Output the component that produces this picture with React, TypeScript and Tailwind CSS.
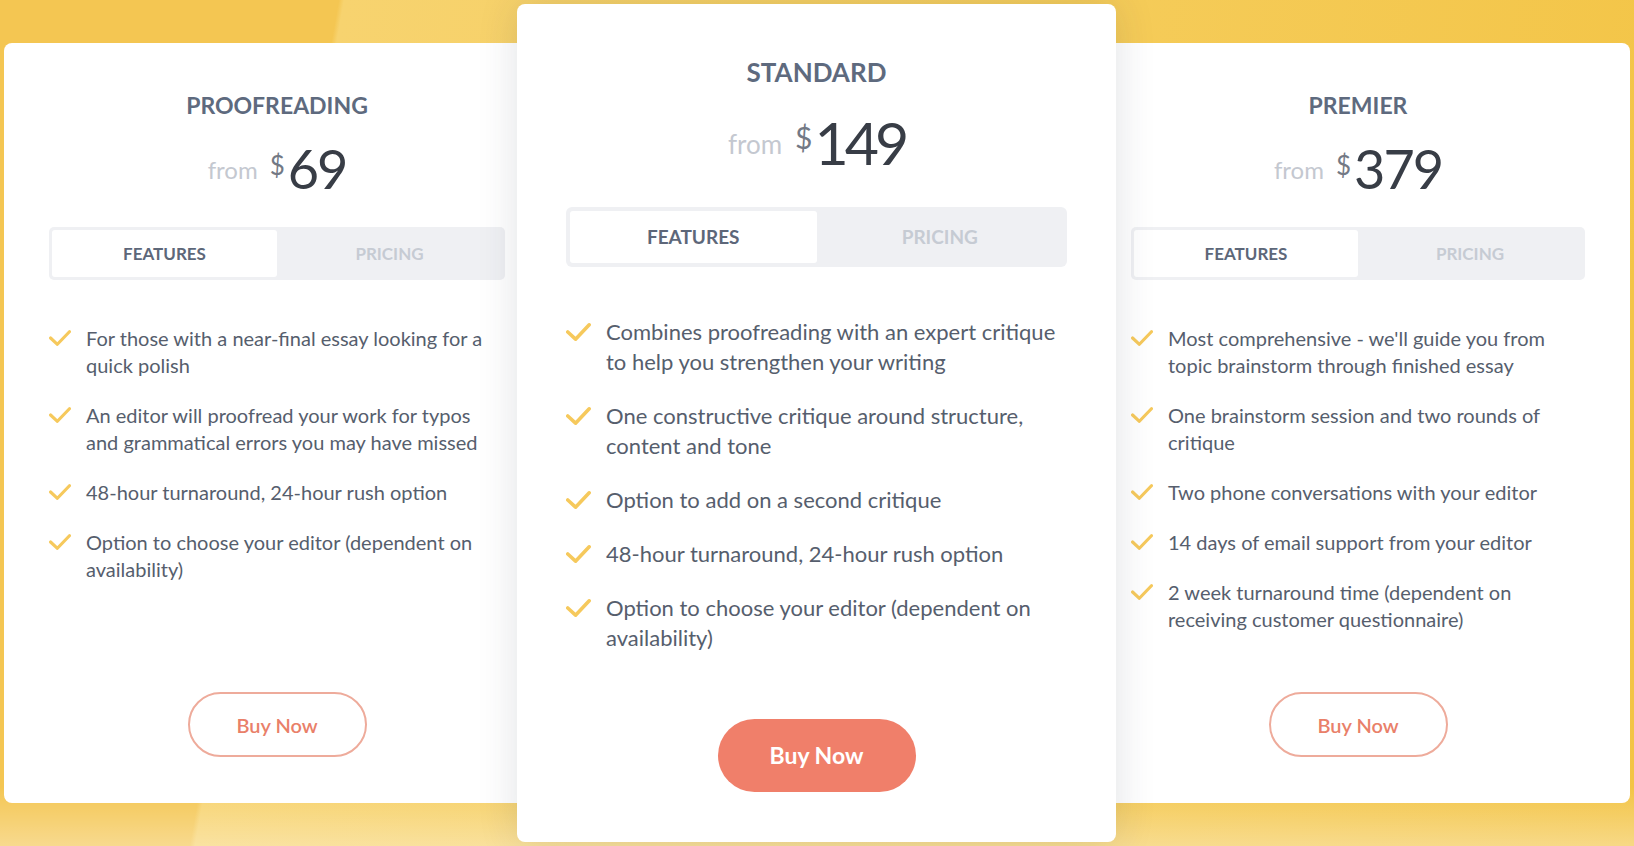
import React from "react";

type Plan = {
  name: string;
  price: string;
  features: string[];
  featured?: boolean;
};

const plans: Plan[] = [
  {
    name: "PROOFREADING",
    price: "69",
    features: [
      "For those with a near-final essay looking for a quick polish",
      "An editor will proofread your work for typos and grammatical errors you may have missed",
      "48-hour turnaround, 24-hour rush option",
      "Option to choose your editor (dependent on availability)",
    ],
  },
  {
    name: "STANDARD",
    price: "149",
    featured: true,
    features: [
      "Combines proofreading with an expert critique to help you strengthen your writing",
      "One constructive critique around structure, content and tone",
      "Option to add on a second critique",
      "48-hour turnaround, 24-hour rush option",
      "Option to choose your editor (dependent on availability)",
    ],
  },
  {
    name: "PREMIER",
    price: "379",
    features: [
      "Most comprehensive - we'll guide you from topic brainstorm through finished essay",
      "One brainstorm session and two rounds of critique",
      "Two phone conversations with your editor",
      "14 days of email support from your editor",
      "2 week turnaround time (dependent on receiving customer questionnaire)",
    ],
  },
];

function Check({ big }: { big?: boolean }) {
  return (
    <svg
      viewBox="0 0 21 15"
      className={big ? "w-[25px] h-[18px] shrink-0 mt-[6px]" : "w-[22px] h-[16px] shrink-0 mt-[5px]"}
      fill="none"
      stroke="#f6c95c"
      strokeWidth={3}
      strokeLinecap="round"
      strokeLinejoin="round"
    >
      <path d="M1.5 7.5 L8 13.5 L19.5 1.5" />
    </svg>
  );
}

function PlanCard({ plan, className }: { plan: Plan; className: string }) {
  const big = plan.featured;
  return (
    <div className={`flex flex-col bg-white rounded-[8px] ${className}`}>
      <h3
        className={
          big
            ? "text-center font-bold text-[#5e6a7e] text-[26px] leading-[32px]"
            : "text-center font-bold text-[#5e6a7e] text-[23px] leading-[28px]"
        }
      >
        {plan.name}
      </h3>

      {big ? (
        <div className="flex items-center justify-center h-[60px] mt-[25px]">
          <span className="text-[26px] leading-[26px] text-[#c4c8d0] mr-[13px] mt-[2px]">from</span>
          <span className="self-start text-[30px] leading-[30px] text-[#737985] mt-[9px] mr-[2px]">$</span>
          <span className="text-[59px] leading-[60px] tracking-[-4px] text-[#383d46]">{plan.price}</span>
        </div>
      ) : (
        <div className="flex items-center justify-center h-[54px] mt-[23px]">
          <span className="text-[24px] leading-[24px] text-[#c4c8d0] mr-[12px] mt-[2px]">from</span>
          <span className="self-start text-[26px] leading-[26px] text-[#737985] mt-[10px] mr-[3px]">$</span>
          <span className="text-[54px] leading-[54px] tracking-[-2px] text-[#383d46]">{plan.price}</span>
        </div>
      )}

      <div
        className={
          big
            ? "flex h-[60px] mt-[34px] p-[4px] rounded-[6px] bg-[#eff0f3]"
            : "flex h-[53px] mt-[31px] p-[3px] rounded-[5px] bg-[#eff0f3]"
        }
      >
        <div
          className={
            big
              ? "flex-1 flex items-center justify-center bg-white rounded-[3px] text-[19px] font-bold text-[#5d6779]"
              : "flex-1 flex items-center justify-center bg-white rounded-[3px] text-[17px] font-bold text-[#5d6779]"
          }
        >
          FEATURES
        </div>
        <div
          className={
            big
              ? "flex-1 flex items-center justify-center text-[19px] font-bold text-[#c6cbd3]"
              : "flex-1 flex items-center justify-center text-[17px] font-bold text-[#c6cbd3]"
          }
        >
          PRICING
        </div>
      </div>

      <ul className={big ? "mt-[50px] flex flex-col gap-[24px]" : "mt-[45px] flex flex-col gap-[23px]"}>
        {plan.features.map((f) => (
          <li key={f} className="flex gap-[15px]">
            <Check big={big} />
            <span
              className={
                big
                  ? "text-[22px] leading-[30px] text-[#565e6d]"
                  : "text-[20px] leading-[27px] text-[#565e6d]"
              }
            >
              {f}
            </span>
          </li>
        ))}
      </ul>

      <div className="mt-auto flex justify-center">
        {big ? (
          <button className="w-[198px] h-[73px] rounded-full bg-[#f07f6a] text-white text-[23px] font-bold mb-[50px]">
            Buy Now
          </button>
        ) : (
          <button className="w-[179px] h-[65px] rounded-full border-2 border-[#eeab9b] text-[#e98069] text-[20px] font-semibold mb-[46px]">
            Buy Now
          </button>
        )}
      </div>
    </div>
  );
}

export default function App() {
  return (
    <div
      className="h-[846px] w-full overflow-hidden flex items-center pl-[4px] bg-[#f5c955] bg-[linear-gradient(to_bottom,rgba(255,255,255,0)_93%,rgba(255,255,255,0.35)),linear-gradient(100deg,#f4c652_19%,#f7d36f_19.3%,#f6cf62_45%,#f3c445)]"
      style={{ fontFamily: "Lato, 'Noto Sans', sans-serif" }}
    >
      <PlanCard plan={plans[0]} className="w-[546px] h-[760px] shrink-0 px-[45px] pt-[48px]" />
      <PlanCard
        plan={plans[1]}
        className="relative z-10 w-[599px] h-[838px] shrink-0 -ml-[33px] -mr-[30px] px-[49px] pt-[52px] shadow-[0_0_40px_rgba(40,50,70,0.14)]"
      />
      <PlanCard plan={plans[2]} className="w-[544px] h-[760px] shrink-0 px-[45px] pt-[48px]" />
    </div>
  );
}
